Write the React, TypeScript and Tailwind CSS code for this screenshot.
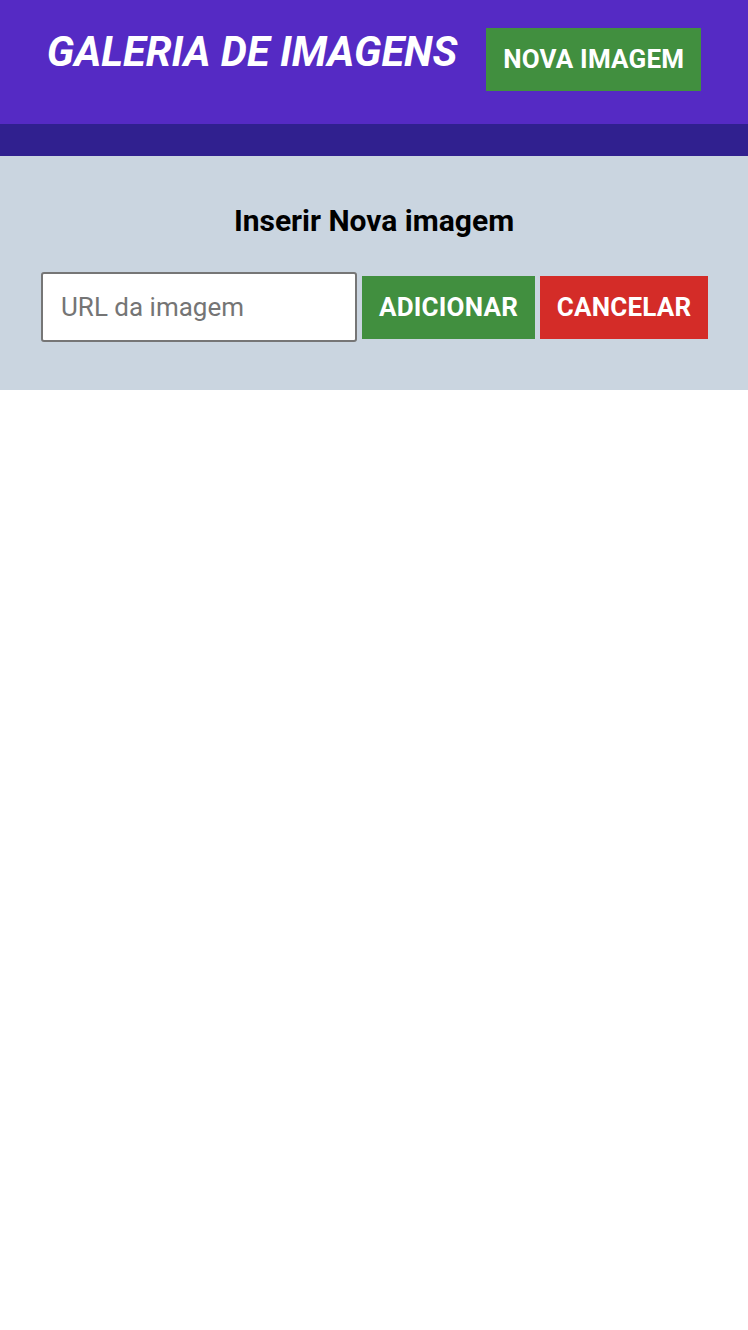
import React, { useState } from 'react';

function Header({ onNew }: { onNew: () => void }) {
  return (
    <header>
      <div className="flex h-[124px] items-start justify-center gap-[29px] bg-[#552ac4] pt-[28px]">
        <h1 className="mt-[3px] text-[41.5px] font-bold italic leading-[42px] text-white">
          GALERIA DE IMAGENS
        </h1>
        <button
          onClick={onNew}
          className="h-[63px] w-[215px] bg-[#418f3f] text-[26px] font-bold tracking-[0.2px] text-white"
        >
          NOVA IMAGEM
        </button>
      </div>
      <div className="h-[32px] bg-[#30208f]" />
    </header>
  );
}

function NewImageForm({ onCancel }: { onCancel: () => void }) {
  const [url, setUrl] = useState('');

  return (
    <section className="h-[234px] bg-[#cad5e0] pt-[47px]">
      <h2 className="text-center text-[30px] font-bold leading-[36px] text-black">
        Inserir Nova imagem
      </h2>
      <div className="mt-[33px] flex items-center justify-center gap-[5px] pl-[1px]">
        <input
          type="text"
          value={url}
          onChange={(e) => setUrl(e.target.value)}
          placeholder="URL da imagem"
          className="h-[70px] w-[316px] rounded-[3px] border-2 border-[#767676] bg-white px-[18px] text-[26px] text-black placeholder:text-[#757575] outline-none"
        />
        <button className="h-[63px] w-[173px] bg-[#418f3f] text-[26px] font-bold tracking-[0.2px] text-white">
          ADICIONAR
        </button>
        <button
          onClick={onCancel}
          className="h-[63px] w-[168px] bg-[#d42c28] text-[26px] font-bold tracking-[0.2px] text-white"
        >
          CANCELAR
        </button>
      </div>
    </section>
  );
}

export default function App() {
  const [showForm, setShowForm] = useState(true);

  return (
    <div className="min-h-[1330px] bg-white font-['Roboto',sans-serif]">
      <Header onNew={() => setShowForm(true)} />
      {showForm && <NewImageForm onCancel={() => setShowForm(false)} />}
    </div>
  );
}
